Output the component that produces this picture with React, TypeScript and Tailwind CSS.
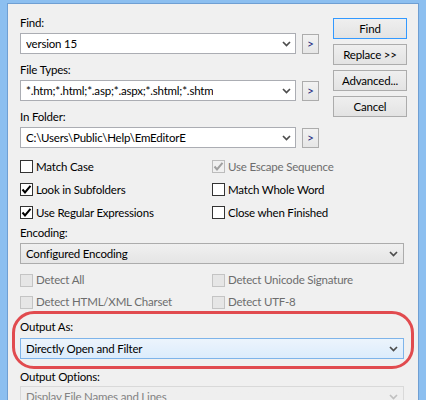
import type { ReactNode } from 'react';

const font = { fontFamily: 'Lato, "Noto Sans", sans-serif' };
const txt = 'text-[11.5px] tracking-[-0.2px]';

function Chevron({ color = '#4d4d4d' }: { color?: string }) {
  return (
    <svg width="9" height="6" viewBox="0 0 9 6" className="shrink-0">
      <path d="M1 1 L4.5 4.5 L8 1" fill="none" stroke={color} strokeWidth="1.7" />
    </svg>
  );
}

function Combo({ value }: { value: string }) {
  return (
    <div className="flex h-[21px] w-[276px] items-center justify-between border border-[#abadb3] bg-white pl-[5px] pr-[4px]">
      <span className={`truncate leading-[16px] text-black ${txt}`}>{value}</span>
      <Chevron />
    </div>
  );
}

function Arrow() {
  return (
    <div className="flex h-[20px] w-[17px] items-center justify-center border border-[#acacac] bg-gradient-to-b from-[#f2f2f2] to-[#e6e6e6] text-[12px] leading-none text-[#1b2a80]">
      &gt;
    </div>
  );
}

function Field({ label, value }: { label: string; value: string }) {
  return (
    <div>
      <div className={`h-[16px] leading-[16px] text-black ${txt}`}>{label}</div>
      <div className="mt-[2px] flex items-center gap-[6px]">
        <Combo value={value} />
        <Arrow />
      </div>
    </div>
  );
}

function Button({ children, primary }: { children: ReactNode; primary?: boolean }) {
  return (
    <div
      className={`flex h-[21px] w-[74px] items-center justify-center border bg-gradient-to-b from-[#efefef] to-[#e3e3e3] leading-none text-black ${txt} ${
        primary ? 'border-[#3399ff]' : 'border-[#acacac]'
      }`}
    >
      {children}
    </div>
  );
}

function Check({
  label,
  checked,
  disabled,
  h = 'h-[23px]',
}: {
  label: string;
  checked?: boolean;
  disabled?: boolean;
  h?: string;
}) {
  return (
    <div className={`flex items-center gap-[3px] ${h}`}>
      <div
        className={`flex h-[13px] w-[13px] items-center justify-center border ${
          disabled
            ? checked
              ? 'border-[#bcbcbc] bg-[#f0f0f0]'
              : 'border-[#c4c4c4] bg-[#e6e6e6]'
            : 'border-[#333333] bg-white'
        }`}
      >
        {checked && (
          <svg width="11" height="11" viewBox="0 0 11 11">
            <path
              d="M1.5 5.5 L4 8.5 L9.5 1.8"
              fill="none"
              stroke={disabled ? '#a0a0a0' : '#000'}
              strokeWidth="2"
            />
          </svg>
        )}
      </div>
      <span className={`leading-[16px] ${txt} ${disabled ? 'text-[#6d6d6d]' : 'text-black'}`}>
        {label}
      </span>
    </div>
  );
}

function Label({ children, className = '' }: { children: ReactNode; className?: string }) {
  return <div className={`h-[16px] leading-[16px] text-black ${txt} ${className}`}>{children}</div>;
}

function DropList({
  value,
  variant,
}: {
  value: string;
  variant: 'normal' | 'hot' | 'disabled';
}) {
  const styles = {
    normal: 'border-[#acacac] from-[#f0f0f0] to-[#e5e5e5] text-black',
    hot: 'border-[#7eb4ea] from-[#ecf4fc] to-[#dcecfc] text-black',
    disabled: 'border-[#d9d9d9] from-[#efefef] to-[#efefef] text-[#838383]',
  }[variant];
  return (
    <div
      className={`flex h-[21px] w-[384px] items-center justify-between border bg-gradient-to-b pl-[5px] pr-[5px] ${styles}`}
    >
      <span className={`leading-[16px] ${txt}`}>{value}</span>
      <Chevron color={variant === 'disabled' ? '#c0c0c0' : '#4d4d4d'} />
    </div>
  );
}

export default function App() {
  return (
    <div className="relative h-[400px] w-[426px] overflow-hidden bg-[#8cbff0] px-[7px] pt-[3px]" style={font}>
      <div className="h-full border-x border-t border-[#6f9fd3] bg-[#f0f0f0] pl-[12px]">
        {/* top: fields + buttons */}
        <div className="flex items-start">
          <div className="flex w-[299px] flex-col gap-[8px] pt-[11px]">
            <Field label="Find:" value="version 15" />
            <Field label="File Types:" value="*.htm;*.html;*.asp;*.aspx;*.shtml;*.shtm" />
            <Field label="In Folder:" value="C:\Users\Public\Help\EmEditorE" />
          </div>
          <div className="ml-[14px] flex flex-col gap-[5px] pt-[14px]">
            <Button primary>Find</Button>
            <Button>Replace &gt;&gt;</Button>
            <Button>Advanced...</Button>
            <Button>Cancel</Button>
          </div>
        </div>

        {/* options */}
        <div className="mt-[7px] grid grid-cols-[192px_192px]">
          <Check label="Match Case" />
          <Check label="Use Escape Sequence" checked disabled />
          <Check label="Look in Subfolders" checked />
          <Check label="Match Whole Word" />
          <Check label="Use Regular Expressions" checked />
          <Check label="Close when Finished" />
        </div>

        <Label className="mt-[1px]">Encoding:</Label>
        <div className="mt-[2px]">
          <DropList value="Configured Encoding" variant="normal" />
        </div>

        <div className="mt-[5px] grid grid-cols-[192px_192px]">
          <Check label="Detect All" disabled h="h-[22px]" />
          <Check label="Detect Unicode Signature" disabled h="h-[22px]" />
          <Check label="Detect HTML/XML Charset" disabled h="h-[22px]" />
          <Check label="Detect UTF-8" disabled h="h-[22px]" />
        </div>

        <Label className="mt-[6px]">Output As:</Label>
        <div className="mt-[3px]">
          <DropList value="Directly Open and Filter" variant="hot" />
        </div>

        <Label className="mt-[10px]">Output Options:</Label>
        <div className="mt-[1px]">
          <DropList value="Display File Names and Lines" variant="disabled" />
        </div>
      </div>

      {/* red annotation ring */}
      <div className="pointer-events-none absolute left-[12px] top-[311px] h-[58px] w-[402px] rounded-[22px] border-[3px] border-[#e14b4f]" />
    </div>
  );
}
